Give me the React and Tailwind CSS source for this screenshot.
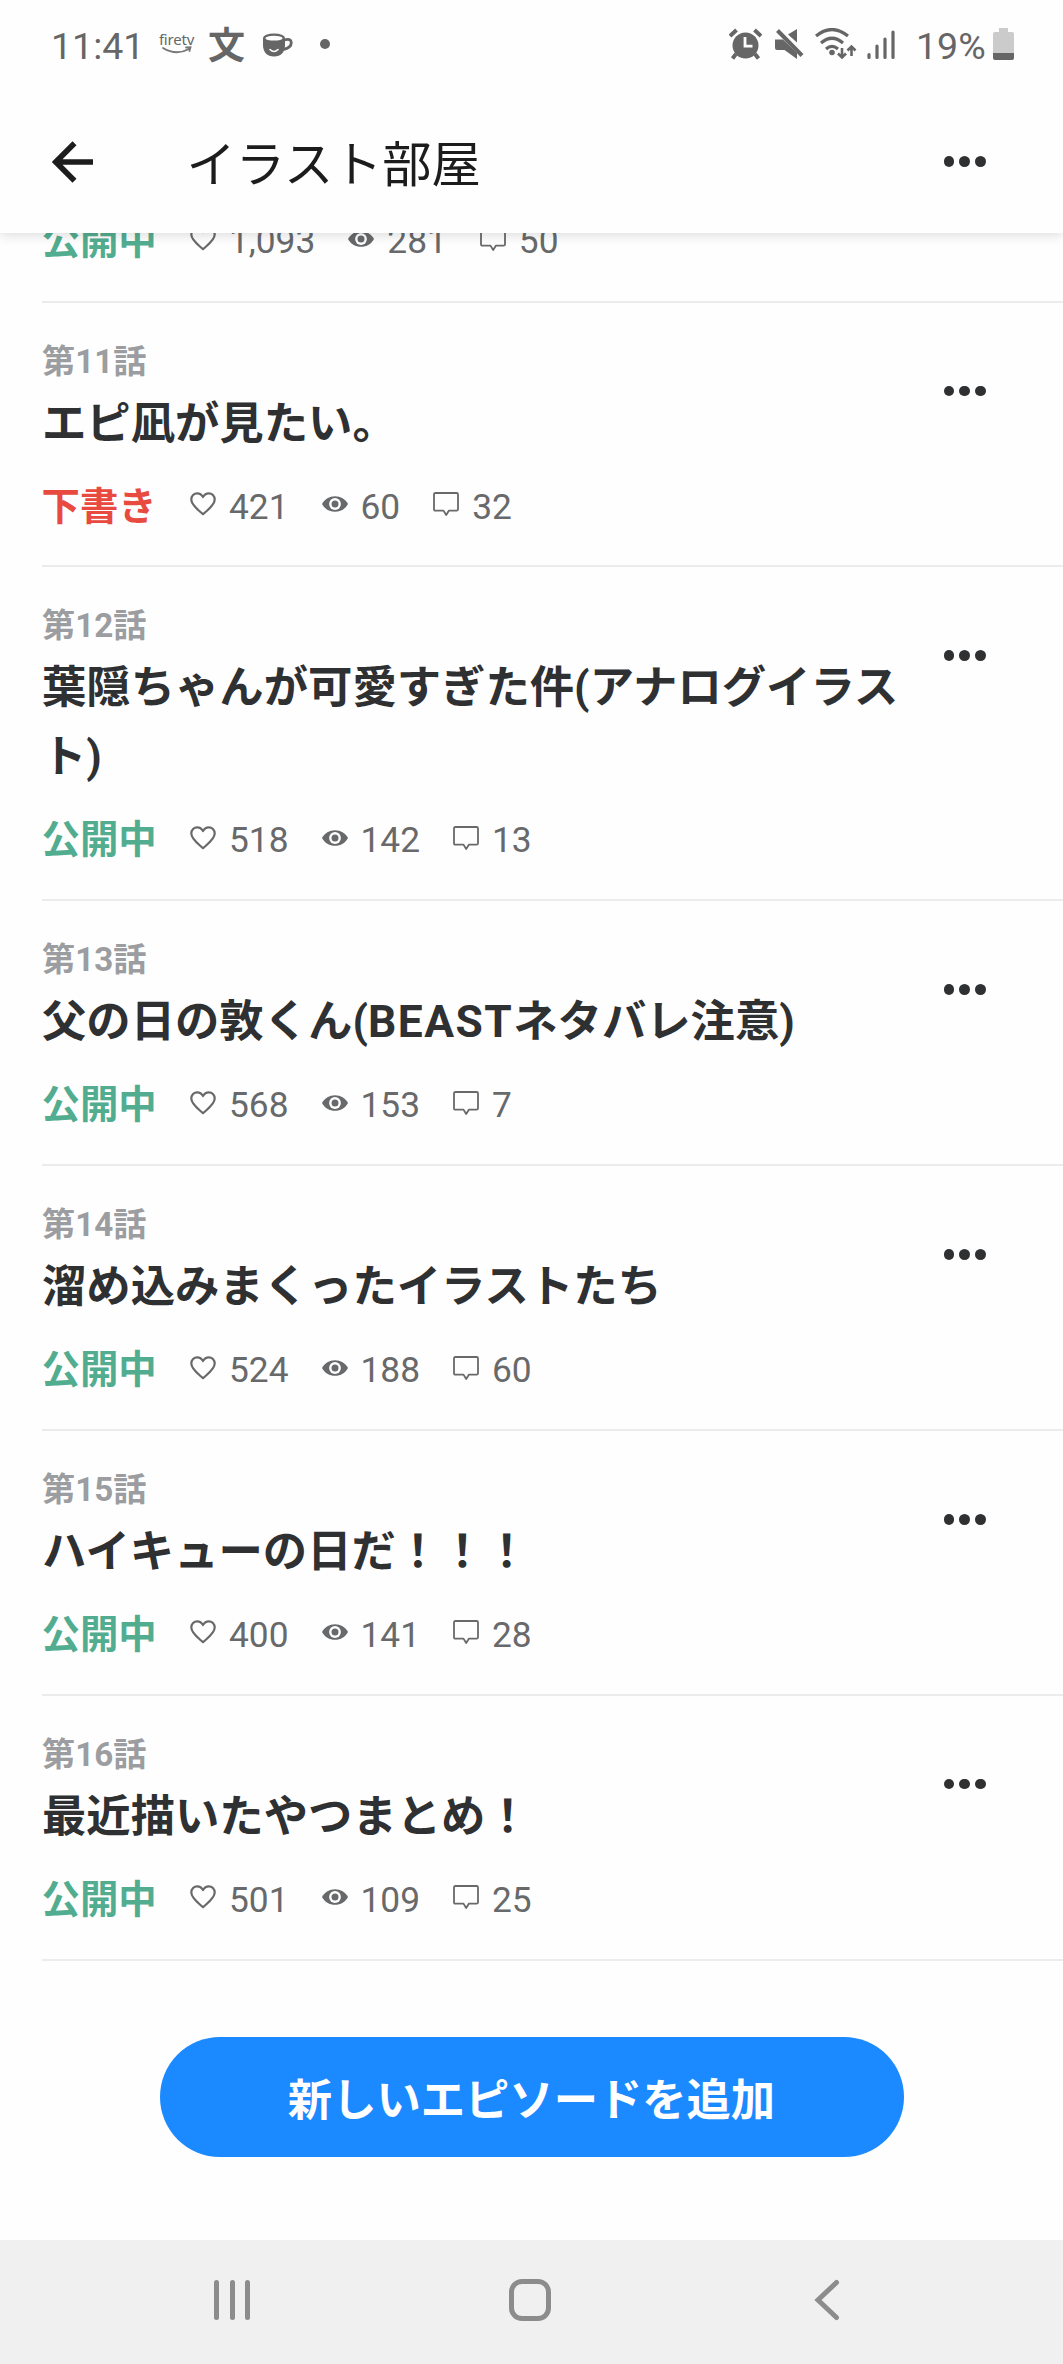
const episodes = [
  { no: 11, title: 'エピ凪が見たい。', draft: true, likes: '421', views: '60', comments: '32' },
  { no: 12, title: '葉隠ちゃんが可愛すぎた件(アナログイラスト)', tall: true, likes: '518', views: '142', comments: '13' },
  { no: 13, title: '父の日の敦くん(BEASTネタバレ注意)', likes: '568', views: '153', comments: '7' },
  { no: 14, title: '溜め込みまくったイラストたち', likes: '524', views: '188', comments: '60' },
  { no: 15, title: 'ハイキューの日だ！！！', likes: '400', views: '141', comments: '28' },
  { no: 16, title: '最近描いたやつまとめ！', likes: '501', views: '109', comments: '25' },
];

function Heart() {
  return (
    <svg className="w-[26px] h-[24px]" viewBox="0 0 26 24" fill="none" stroke="#68696b" strokeWidth="2.2" strokeLinejoin="round">
      <path d="M13 22.2C9.5 18.8 1.3 13.6 1.3 7.6C1.3 4 4 1.3 7.2 1.3C9.8 1.3 11.8 2.8 13 5C14.2 2.8 16.2 1.3 18.8 1.3C22 1.3 24.7 4 24.7 7.6C24.7 13.6 16.5 18.8 13 22.2Z" />
    </svg>
  );
}

function Eye() {
  return (
    <svg className="w-[26px] h-[24px]" viewBox="0 0 26 24">
      <path d="M0 12C2.6 7 7.4 4.2 13 4.2S23.4 7 26 12C23.4 17 18.6 19.8 13 19.8S2.6 17 0 12Z" fill="#68696b" />
      <circle cx="13" cy="12" r="5.9" fill="#fff" />
      <circle cx="13" cy="12" r="3.5" fill="#68696b" />
    </svg>
  );
}

function Comment() {
  return (
    <svg className="w-[26px] h-[24px]" viewBox="0 0 26 24" fill="none" stroke="#68696b" strokeWidth="1.8" strokeLinejoin="round">
      <path d="M2.4 1H23.6Q25 1 25 2.4V17.2Q25 18.6 23.6 18.6H16L13.2 23L10.5 18.6H2.4Q1 18.6 1 17.2V2.4Q1 1 2.4 1Z" />
    </svg>
  );
}

function Dots() {
  return (
    <div className="flex gap-[5px] w-[42px]">
      <span className="size-[10.6px] rounded-full bg-[#2f3032]" />
      <span className="size-[10.6px] rounded-full bg-[#2f3032]" />
      <span className="size-[10.6px] rounded-full bg-[#2f3032]" />
    </div>
  );
}

function Stat({ icon, value }) {
  return (
    <div className="flex items-center gap-[13px] mr-[33px]">
      <span className="-mt-[5px]">{icon}</span>
      <span className="text-[35.3px] leading-[40px] text-[#68696b]">{value}</span>
    </div>
  );
}

function Stats({ draft, likes, views, comments }) {
  return (
    <div className="flex items-center h-[40px]">
      <span className={draft ? 'w-[148px] -ml-[0.5px] mr-[0.5px] text-[38.4px] leading-[40px] font-bold text-[#e84a40]' : 'w-[148px] -ml-[0.5px] mr-[0.5px] text-[38.4px] leading-[40px] font-bold text-[#52ad90]'}>
        {draft ? '下書き' : '公開中'}
      </span>
      <Stat icon={<Heart />} value={likes} />
      <Stat icon={<Eye />} value={views} />
      <Stat icon={<Comment />} value={comments} />
    </div>
  );
}

// Latin words are tracked slightly wider than the Japanese text around them.
function Title({ text }) {
  return text.split(/([A-Z]+)/).map((part, i) =>
    i % 2 === 1 ? (
      <span key={i} className="tracking-[1.5px]">{part}</span>
    ) : (
      part
    ),
  );
}

function Episode({ ep }) {
  return (
    <li className={ep.tall ? 'ml-[42px] h-[333.8px] border-b-2 border-[#ececed] flex' : 'ml-[42px] h-[264.9px] border-b-2 border-[#ececed] flex'}>
      <div className="w-[880px] pt-[39px]">
        <p className="text-[33.2px] leading-[40px] font-bold text-[#9b9da0]">第{ep.no}話</p>
        <h2 className="mt-[8px] text-[44.35px] leading-[69px] font-bold text-[#2f3032]">
          <Title text={ep.title} />
        </h2>
        <div className="mt-[28px]">
          <Stats {...ep} />
        </div>
      </div>
      <div className="pt-[83px] ml-[21.8px]">
        <Dots />
      </div>
    </li>
  );
}

function StatusBar() {
  return (
    <div className="h-[90px] flex items-center text-[#666]">
      <span className="ml-[51px] w-[107px] text-[37.5px] leading-[40px] mt-[2px]">11:41</span>
      <div className="w-[37px] mr-[13px] flex flex-col items-center -mt-[4px]">
        <span className="text-[15px] leading-[14px] font-['Noto_Sans'] tracking-[-0.2px]">firetv</span>
        <svg className="w-[30px] h-[8px]" viewBox="0 0 30 8" fill="none" stroke="#777" strokeWidth="1.8" strokeLinecap="round">
          <path d="M1 2Q14 10 27 3M24 1.5L28.5 1.2L27.5 5" />
        </svg>
      </div>
      <span className="w-[36px] mr-[19px] text-[37px] leading-[40px] font-bold font-['Noto_Sans_CJK_JP',sans-serif] -mt-[5px]">文</span>
      <svg className="w-[30px] h-[24px]" viewBox="0 0 30 24">
        <path d="M0 5V12C0 19 4 23.5 11 23.5S22 19 22 12V5Z" fill="#666" />
        <ellipse cx="11" cy="5" rx="11" ry="4.5" fill="#666" />
        <ellipse cx="11" cy="5.2" rx="8.6" ry="2.4" fill="#fff" />
        <path d="M21 7Q28 5 28.3 9.5Q28.3 15 20 16.5" fill="none" stroke="#666" strokeWidth="2.8" />
        <path d="M7 16.5Q11 20.5 15 16.5" fill="none" stroke="#fff" strokeWidth="1.6" strokeLinecap="round" />
      </svg>
      <span className="ml-[27px] -mt-[3px] size-[10px] rounded-full bg-[#666]" />
      <svg className="ml-auto w-[33px] h-[32px] -mt-[2px]" viewBox="0 0 33 32">
        <circle cx="16.5" cy="17.5" r="13" fill="#666" />
        <path d="M1 8L7.5 2M32 8L25.5 2" stroke="#666" strokeWidth="4" />
        <path d="M7 26L3.5 30.5M26 26L29.5 30.5" stroke="#666" strokeWidth="4" />
        <path d="M16 9V18.2H23.5" fill="none" stroke="#fff" strokeWidth="2.8" />
      </svg>
      <svg className="ml-[13px] w-[30px] h-[32px] -mt-[2px]" viewBox="0 0 30 32">
        <path d="M0 11.5H8L22 25V31L9.5 22H2Q0 22 0 20Z" fill="#666" />
        <path d="M13 6.5L22 1V14.5Z" fill="#666" />
        <path d="M2.5 2.5L27 27.5" stroke="#666" strokeWidth="4" />
      </svg>
      <svg className="ml-[10.5px] w-[42px] h-[32px] -mt-[2px]" viewBox="0 0 42 32" fill="none" stroke="#666">
        <path d="M1 8Q17 -5 33 8" strokeWidth="3.2" />
        <path d="M6 15Q17 5.5 28 15" strokeWidth="3.2" />
        <path d="M11 21Q17 15.8 23 21" strokeWidth="3.2" />
        <circle cx="17" cy="24.5" r="2.8" fill="#666" stroke="none" />
        <path d="M27 20V28.5M23 25.5L27 29.5L31 25.5M36.5 28V19M32.5 22.5L36.5 18.5L40.5 22.5" strokeWidth="2.6" />
      </svg>
      <svg className="ml-[9.5px] w-[28px] h-[32px] -mt-[2px]" viewBox="0 0 28 32" stroke="#666" strokeWidth="3.2" strokeLinecap="round">
        <path d="M2 26.5V29.5M10 18V29.5M18 11V29.5M26 4V29.5" />
      </svg>
      <span className="ml-[21.5px] w-[77px] text-[37.5px] leading-[40px] mt-[2px]">19%</span>
      <div className="w-[21px] mr-[49px] flex flex-col items-center -mt-[2px]">
        <span className="w-[9px] h-[4px] bg-[#cbcbcb]" />
        <span className="w-[21px] h-[21px] rounded-t-[2px] bg-[#cbcbcb]" />
        <span className="w-[21px] h-[7px] rounded-b-[2px] bg-[#666]" />
      </div>
    </div>
  );
}

export default function App() {
  return (
    <div className="w-[1063px] h-[2364px] flex flex-col overflow-hidden bg-[#fefefe] font-[Roboto,'Noto_Sans_CJK_JP',sans-serif] whitespace-normal">
      <div className="relative z-10 h-[233px] shrink-0 bg-[#fefefe] shadow-[0_1px_12px_rgba(0,0,0,0.16)]">
        <StatusBar />
        <header className="flex items-center h-[143px]">
          <svg className="ml-[52px] w-[42px] h-[42px]" viewBox="0 0 42 42" fill="none" stroke="#1c1c1c" strokeWidth="5.6">
            <path d="M41 21H4M22.5 2.2L3.8 21L22.5 39.8" />
          </svg>
          <h1 className="ml-[92.5px] pt-[6px] text-[49.2px] leading-[60px] text-[#1c1c1c]">イラスト部屋</h1>
          <div className="ml-auto mr-[77.2px]">
            <Dots />
          </div>
        </header>
      </div>
      <main className="h-[2007px] shrink-0 flow-root">
        <div className="ml-[42px] h-[69.5px] border-b-2 border-[#ececed] flow-root">
          <div className="-mt-[12px]">
            <Stats likes="1,093" views="281" comments="50" />
          </div>
        </div>
        <ul>
          {episodes.map((ep) => (
            <Episode key={ep.no} ep={ep} />
          ))}
        </ul>
        <button className="mt-[76.5px] mx-auto pt-[8px] flex items-center justify-center w-[744px] h-[120px] rounded-full bg-[#1b89ff] text-white text-[44.3px] leading-[60px] font-bold">
          新しいエピソードを追加
        </button>
      </main>
      <nav className="h-[124px] shrink-0 bg-[#f0f0f0] flex items-center">
        <div className="ml-[214px] -mt-[4px] flex gap-[10.5px]">
          <span className="w-[5px] h-[40px] rounded-full bg-[#8c8c8c]" />
          <span className="w-[5px] h-[40px] rounded-full bg-[#8c8c8c]" />
          <span className="w-[5px] h-[40px] rounded-full bg-[#8c8c8c]" />
        </div>
        <span className="ml-[259px] -mt-[4px] size-[42px] rounded-[13px] border-5 border-[#8c8c8c]" />
        <svg className="ml-[263px] -mt-[4px] w-[26px] h-[42px]" viewBox="0 0 26 42" fill="none" stroke="#8c8c8c" strokeWidth="5" strokeLinecap="round">
          <path d="M22.5 3.5L4 21L22.5 38.5" />
        </svg>
      </nav>
    </div>
  );
}
